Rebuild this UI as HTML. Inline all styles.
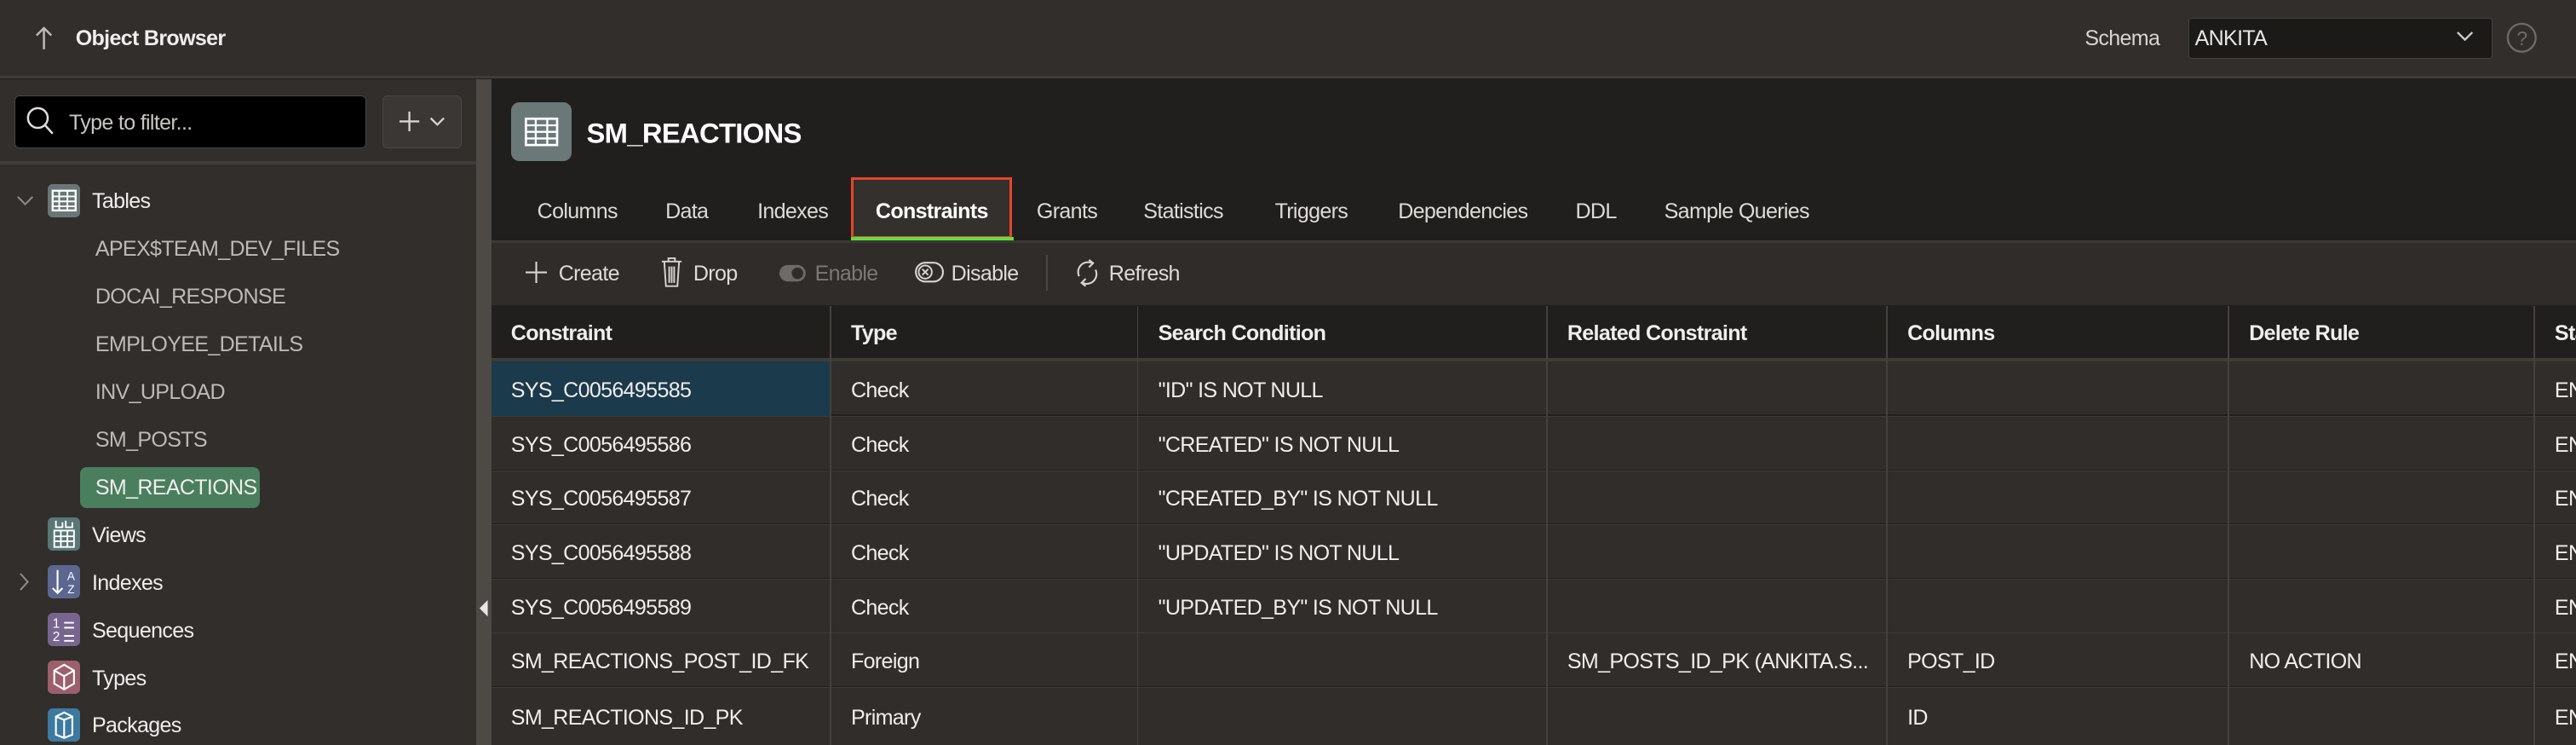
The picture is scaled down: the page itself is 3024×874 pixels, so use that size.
<!DOCTYPE html>
<html><head><meta charset="utf-8"><style>
html,body{margin:0;padding:0;background:#201f1d;width:3024px;height:874px;overflow:hidden}
#w{position:relative;width:1568px;height:454px;zoom:1.92857;font-family:"Liberation Sans",sans-serif;font-size:13px;letter-spacing:-0.35px;color:#f0eeec;overflow:hidden;background:#201f1d}
.a{position:absolute;white-space:nowrap}
.t{transform:translateY(-44%)}
.hd{left:0;top:0;width:1568px;height:46px;background:#312e2b;border-bottom:2px solid #403c38}
.lp{left:0;top:48px;width:290px;height:406px;background:#312e2b}
.sp{left:290px;top:48px;width:9px;height:406px;background:#4d4945}
.ic{width:20px;height:20px;border-radius:3px}
.ch{color:#bdb9b4}
.tab{top:128px;color:#dedbd7}
.tb{top:166px;color:#dedbd7}
.th{top:186px;height:32px;background:#211f1d;left:299px;width:1269px}
.row{left:299px;width:1269px;height:32px;background:#302d2a;border-top:1px solid #3f3b37}
.vl{width:1px;background:#45413d}
</style></head><body><div id="w">
<div class="a hd"></div>
<svg class="a" style="left:21px;top:15px" width="12" height="16" viewBox="0 0 12 16"><path d="M6 15V2M1.5 6.5L6 2l4.5 4.5" stroke="#bdb9b4" stroke-width="1.3" fill="none"/></svg>
<div class="a t" style="left:46px;top:23px;font-weight:bold">Object Browser</div>
<div class="a t" style="left:1269px;top:23px;color:#d8d5d1">Schema</div>
<div class="a" style="left:1332px;top:11px;width:184px;height:24px;background:#1b1a18;border:1px solid #45413d;border-radius:2px"></div>
<div class="a t" style="left:1336px;top:23px;color:#e8e6e3">ANKITA</div>
<svg class="a" style="left:1495px;top:18px" width="11" height="8"><path d="M1 1.5l4.5 4.5L10 1.5" stroke="#cfcbc7" stroke-width="1.2" fill="none"/></svg>
<svg class="a" style="left:1525px;top:13px" width="20" height="20"><circle cx="10" cy="10" r="8.5" stroke="#6e6a66" fill="none" stroke-width="1.2"/><text x="10" y="14.5" font-size="12" text-anchor="middle" fill="#6e6a66" font-family="Liberation Sans">?</text></svg>

<div class="a lp"></div>
<div class="a" style="left:0;top:98px;width:290px;height:2px;background:#403c38"></div>
<div class="a" style="left:9px;top:58px;width:213px;height:31px;background:#000;border:1px solid #4a4642;border-radius:3px"></div>
<svg class="a" style="left:15px;top:64px" width="20" height="20"><circle cx="8" cy="8" r="6" stroke="#e0ddd9" stroke-width="1.3" fill="none"/><path d="M12.3 12.3L17 17.5" stroke="#e0ddd9" stroke-width="1.3"/></svg>
<div class="a t" style="left:42px;top:74px;color:#c9c5c1">Type to filter...</div>
<div class="a" style="left:233px;top:58px;width:47px;height:31px;background:#3b3734;border:1px solid #4a4642;border-radius:3px"></div>
<svg class="a" style="left:243px;top:66px" width="30" height="16"><path d="M6 2v12M0 8h12" stroke="#d8d5d1" stroke-width="1.2"/><path d="M19 6l4 4 4-4" stroke="#d8d5d1" stroke-width="1.2" fill="none"/></svg>

<svg class="a" style="left:10px;top:118px" width="11" height="8"><path d="M1 1.5l4.5 4.5L10 1.5" stroke="#8c8884" stroke-width="1.1" fill="none"/></svg>
<div class="a ic" style="left:29px;top:112px;background:#6a7676"><svg width="20" height="20"><rect x="3" y="4" width="14" height="12" stroke="#fff" fill="none" stroke-width="1.2"/><path d="M3 7.5h14M3 10.5h14M3 13.5h14M7 4v12M12 4v12" stroke="#fff" stroke-width="1"/></svg></div>
<div class="a t" style="left:56px;top:122px">Tables</div>
<div class="a t ch" style="left:58px;top:151px">APEX$TEAM_DEV_FILES</div>
<div class="a t ch" style="left:58px;top:180px">DOCAI_RESPONSE</div>
<div class="a t ch" style="left:58px;top:209px">EMPLOYEE_DETAILS</div>
<div class="a t ch" style="left:58px;top:238px">INV_UPLOAD</div>
<div class="a t ch" style="left:58px;top:267px">SM_POSTS</div>
<div class="a" style="left:49px;top:284px;width:109px;height:25px;background:#4a7f5d;border-radius:4px"></div>
<div class="a t" style="left:58px;top:296px">SM_REACTIONS</div>
<div class="a ic" style="left:29px;top:315px;background:#587776"><svg width="20" height="20"><path d="M5 2v4h4V3M11 2v4h4V3" stroke="#fff" fill="none"/><rect x="4" y="8" width="12" height="10" stroke="#fff" fill="none"/><path d="M4 11.5h12M4 14.5h12M8 8v10M12 8v10" stroke="#fff"/></svg></div>
<div class="a t" style="left:56px;top:325px">Views</div>
<svg class="a" style="left:11px;top:348px" width="8" height="12"><path d="M1.5 1l4.5 5-4.5 5" stroke="#8c8884" stroke-width="1.1" fill="none"/></svg>
<div class="a ic" style="left:29px;top:344px;background:#5b6791"><svg width="20" height="20"><path d="M6 3v14M3 14l3 3 3-3" stroke="#fff" fill="none" stroke-width="1.1"/><text x="14" y="9" font-size="7" fill="#fff" text-anchor="middle" font-family="Liberation Sans">A</text><text x="14" y="17" font-size="7" fill="#fff" text-anchor="middle" font-family="Liberation Sans">Z</text></svg></div>
<div class="a t" style="left:56px;top:354px">Indexes</div>
<div class="a ic" style="left:29px;top:373px;background:#77658f"><svg width="20" height="20"><text x="5" y="9" font-size="8" fill="#fff" text-anchor="middle" font-family="Liberation Sans">1</text><text x="5" y="17" font-size="8" fill="#fff" text-anchor="middle" font-family="Liberation Sans">2</text><path d="M10 6h6M10 9h6M10 14h6M10 17h6" stroke="#fff"/></svg></div>
<div class="a t" style="left:56px;top:383px">Sequences</div>
<div class="a ic" style="left:29px;top:402px;background:#9d5f6c"><svg width="20" height="20"><path d="M10 2.5l6 3.5v8l-6 3.5-6-3.5V6z M4 6l6 3.5 6-3.5M10 9.5v8" stroke="#fff" fill="none" stroke-width="1.1"/></svg></div>
<div class="a t" style="left:56px;top:412px">Types</div>
<div class="a ic" style="left:29px;top:431px;background:#3c7aa0"><svg width="20" height="20"><path d="M5 5l5-2.5 5 2.5v11l-5 2-5-2z M5 5l5 2 5-2M10 7v11" stroke="#fff" fill="none" stroke-width="1.1"/></svg></div>
<div class="a t" style="left:56px;top:441px">Packages</div>

<div class="a sp"></div>
<svg class="a" style="left:291px;top:365px" width="7" height="10"><path d="M6 0v10L1 5z" fill="#e8e6e3"/></svg>

<div class="a" style="left:311px;top:62px;width:37px;height:36px;background:#6b7878;border-radius:5px"><svg width="37" height="36"><rect x="9" y="10" width="19" height="16" stroke="#fff" fill="none" stroke-width="1.4"/><path d="M9 14h19M9 18h19M9 22h19M15 10v16M22 10v16" stroke="#fff" stroke-width="1.2"/></svg></div>
<div class="a t" style="left:357px;top:80px;font-size:17px;font-weight:bold;color:#fff">SM_REACTIONS</div>

<div class="a" style="left:518px;top:108px;width:95px;height:34px;background:#33302d;border:2px solid #e5452a"></div>
<div class="a" style="left:518px;top:144px;width:99px;height:2px;background:#5de045"></div>
<div class="a t tab" style="left:327px">Columns</div>
<div class="a t tab" style="left:405px">Data</div>
<div class="a t tab" style="left:461px">Indexes</div>
<div class="a t tab" style="left:533px;font-weight:bold;color:#fff">Constraints</div>
<div class="a t tab" style="left:631px">Grants</div>
<div class="a t tab" style="left:696px">Statistics</div>
<div class="a t tab" style="left:776px">Triggers</div>
<div class="a t tab" style="left:851px">Dependencies</div>
<div class="a t tab" style="left:959px">DDL</div>
<div class="a t tab" style="left:1013px">Sample Queries</div>

<div class="a" style="left:299px;top:146px;width:1269px;height:38px;background:#2f2c29;border-top:2px solid #3c3935"></div>
<svg class="a" style="left:320px;top:159px" width="13" height="13"><path d="M6.5 0v13M0 6.5h13" stroke="#d8d5d1" stroke-width="1.1"/></svg>
<div class="a t tb" style="left:340px">Create</div>
<svg class="a" style="left:402px;top:156px" width="14" height="19"><path d="M1 3h12M5 3V1h4v2M2.5 3l1 15h7l1-15M5.5 6v10M7 6v10M8.5 6v10" stroke="#d8d5d1" fill="none" stroke-width="1"/></svg>
<div class="a t tb" style="left:422px">Drop</div>
<svg class="a" style="left:474px;top:160px" width="18" height="12"><rect x="0.5" y="1" width="16" height="10" rx="5" fill="#6e6a66"/><circle cx="11.5" cy="6" r="4" fill="#2f2c29" stroke="#6e6a66"/></svg>
<div class="a t tb" style="left:496px;color:#7c7874">Enable</div>
<svg class="a" style="left:557px;top:159px" width="18" height="13"><rect x="0.6" y="0.6" width="16.5" height="11.5" rx="5.8" stroke="#d8d5d1" fill="none" stroke-width="1.1"/><circle cx="6.3" cy="6.3" r="4" stroke="#d8d5d1" fill="none"/><path d="M4.5 4.5l3.6 3.6M8.1 4.5L4.5 8.1" stroke="#d8d5d1"/></svg>
<div class="a t tb" style="left:579px">Disable</div>
<div class="a" style="left:637px;top:155px;width:1px;height:22px;background:#4a4642"></div>
<svg class="a" style="left:654px;top:156px" width="16" height="20"><path d="M3 12A6 6 0 0 1 11 4M13 8a6 6 0 0 1-8 8M9 2l2.5 2L9 6.5M7 18l-2.5-2L7 13.5" stroke="#d8d5d1" fill="none" stroke-width="1.1"/></svg>
<div class="a t tb" style="left:675px">Refresh</div>

<div class="a th"></div>
<div class="a t" style="left:311px;top:202px;font-weight:bold">Constraint</div>
<div class="a t" style="left:518px;top:202px;font-weight:bold">Type</div>
<div class="a t" style="left:705px;top:202px;font-weight:bold">Search Condition</div>
<div class="a t" style="left:954px;top:202px;font-weight:bold">Related Constraint</div>
<div class="a t" style="left:1161px;top:202px;font-weight:bold">Columns</div>
<div class="a t" style="left:1369px;top:202px;font-weight:bold">Delete Rule</div>
<div class="a t" style="left:1555px;top:202px;font-weight:bold">Status</div>
<div class="a" style="left:299px;top:218px;width:1269px;height:2px;background:#3f3b37"></div>

<div class="a row" style="top:220px;border:0"></div>
<div class="a" style="left:299px;top:220px;width:206px;height:33px;background:#1b3a4c"></div>
<div class="a row" style="top:253px"></div>
<div class="a row" style="top:286px"></div>
<div class="a row" style="top:319px"></div>
<div class="a row" style="top:352px"></div>
<div class="a row" style="top:385px"></div>
<div class="a row" style="top:418px;height:36px"></div>

<div class="a vl" style="left:505px;top:186px;height:268px"></div>
<div class="a vl" style="left:692px;top:186px;height:268px"></div>
<div class="a vl" style="left:941px;top:186px;height:268px"></div>
<div class="a vl" style="left:1148px;top:186px;height:268px"></div>
<div class="a vl" style="left:1356px;top:186px;height:268px"></div>
<div class="a vl" style="left:1542px;top:186px;height:268px"></div>

<div class="a t" style="left:311px;top:237px">SYS_C0056495585</div>
<div class="a t" style="left:518px;top:237px">Check</div>
<div class="a t" style="left:705px;top:237px">"ID" IS NOT NULL</div>
<div class="a t" style="left:1555px;top:237px">ENABLED</div>
<div class="a t" style="left:311px;top:270px">SYS_C0056495586</div>
<div class="a t" style="left:518px;top:270px">Check</div>
<div class="a t" style="left:705px;top:270px">"CREATED" IS NOT NULL</div>
<div class="a t" style="left:1555px;top:270px">ENABLED</div>
<div class="a t" style="left:311px;top:303px">SYS_C0056495587</div>
<div class="a t" style="left:518px;top:303px">Check</div>
<div class="a t" style="left:705px;top:303px">"CREATED_BY" IS NOT NULL</div>
<div class="a t" style="left:1555px;top:303px">ENABLED</div>
<div class="a t" style="left:311px;top:336px">SYS_C0056495588</div>
<div class="a t" style="left:518px;top:336px">Check</div>
<div class="a t" style="left:705px;top:336px">"UPDATED" IS NOT NULL</div>
<div class="a t" style="left:1555px;top:336px">ENABLED</div>
<div class="a t" style="left:311px;top:369px">SYS_C0056495589</div>
<div class="a t" style="left:518px;top:369px">Check</div>
<div class="a t" style="left:705px;top:369px">"UPDATED_BY" IS NOT NULL</div>
<div class="a t" style="left:1555px;top:369px">ENABLED</div>
<div class="a t" style="left:311px;top:402px">SM_REACTIONS_POST_ID_FK</div>
<div class="a t" style="left:518px;top:402px">Foreign</div>
<div class="a t" style="left:954px;top:402px">SM_POSTS_ID_PK (ANKITA.S...</div>
<div class="a t" style="left:1161px;top:402px">POST_ID</div>
<div class="a t" style="left:1369px;top:402px">NO ACTION</div>
<div class="a t" style="left:1555px;top:402px">ENABLED</div>
<div class="a t" style="left:311px;top:436px">SM_REACTIONS_ID_PK</div>
<div class="a t" style="left:518px;top:436px">Primary</div>
<div class="a t" style="left:1161px;top:436px">ID</div>
<div class="a t" style="left:1555px;top:436px">ENABLED</div>
</div></body></html>
